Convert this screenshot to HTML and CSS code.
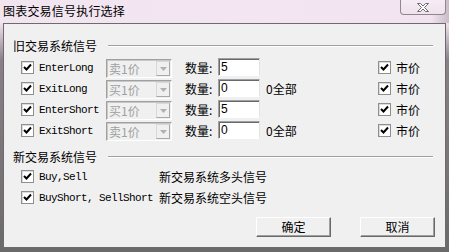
FILE: index.html
```html
<!DOCTYPE html>
<html lang="zh-CN">
<head>
  <meta charset="UTF-8">
  <meta name="viewport" content="width=device-width, initial-scale=1">
  <title>图表交易信号执行选择</title>
  <link rel="stylesheet" href="styles.css">
</head>
<body>

  <div class="window">
    <div class="titlebar">
      <span class="title">图表交易信号执行选择</span>
      <span class="close">
        <svg width="14" height="11" viewBox="0 0 14 11">
          <path d="M1.5 1.5h3l2.5 2.5 2.5-2.5h3l-4 4 4 4h-3l-2.5-2.5-2.5 2.5h-3l4-4z" fill="#fff" stroke="#6d6d6d" stroke-width="1"/>
        </svg>
      </span>
    </div>

    <div class="client">

      <div class="group-head"><span>旧交易系统信号</span><i class="rule"></i></div>

      <div class="sig-row">
        <label class="chk"><span class="box"><svg width="9" height="9" viewBox="0 0 9 9"><path d="M1 4l2.5 2.5L8 1.5" /></svg></span><span class="code">EnterLong</span></label>
        <div class="combo"><span class="combo-text">卖1价</span><span class="drop"><svg width="7" height="4" viewBox="0 0 7 4"><path d="M0 0h7L3.5 4z"/></svg></span></div>
        <span class="qty-label">数量:</span>
        <div class="field">5</div>
        <span class="hint"></span>
        <label class="chk"><span class="box"><svg width="9" height="9" viewBox="0 0 9 9"><path d="M1 4l2.5 2.5L8 1.5" /></svg></span><span>市价</span></label>
      </div>

      <div class="sig-row">
        <label class="chk"><span class="box"><svg width="9" height="9" viewBox="0 0 9 9"><path d="M1 4l2.5 2.5L8 1.5" /></svg></span><span class="code">ExitLong</span></label>
        <div class="combo"><span class="combo-text">买1价</span><span class="drop"><svg width="7" height="4" viewBox="0 0 7 4"><path d="M0 0h7L3.5 4z"/></svg></span></div>
        <span class="qty-label">数量:</span>
        <div class="field">0</div>
        <span class="hint">0全部</span>
        <label class="chk"><span class="box"><svg width="9" height="9" viewBox="0 0 9 9"><path d="M1 4l2.5 2.5L8 1.5" /></svg></span><span>市价</span></label>
      </div>

      <div class="sig-row">
        <label class="chk"><span class="box"><svg width="9" height="9" viewBox="0 0 9 9"><path d="M1 4l2.5 2.5L8 1.5" /></svg></span><span class="code">EnterShort</span></label>
        <div class="combo"><span class="combo-text">买1价</span><span class="drop"><svg width="7" height="4" viewBox="0 0 7 4"><path d="M0 0h7L3.5 4z"/></svg></span></div>
        <span class="qty-label">数量:</span>
        <div class="field">5</div>
        <span class="hint"></span>
        <label class="chk"><span class="box"><svg width="9" height="9" viewBox="0 0 9 9"><path d="M1 4l2.5 2.5L8 1.5" /></svg></span><span>市价</span></label>
      </div>

      <div class="sig-row">
        <label class="chk"><span class="box"><svg width="9" height="9" viewBox="0 0 9 9"><path d="M1 4l2.5 2.5L8 1.5" /></svg></span><span class="code">ExitShort</span></label>
        <div class="combo"><span class="combo-text">卖1价</span><span class="drop"><svg width="7" height="4" viewBox="0 0 7 4"><path d="M0 0h7L3.5 4z"/></svg></span></div>
        <span class="qty-label">数量:</span>
        <div class="field">0</div>
        <span class="hint">0全部</span>
        <label class="chk"><span class="box"><svg width="9" height="9" viewBox="0 0 9 9"><path d="M1 4l2.5 2.5L8 1.5" /></svg></span><span>市价</span></label>
      </div>

      <div class="group-head second"><span>新交易系统信号</span><i class="rule"></i></div>

      <div class="new-row">
        <label class="chk"><span class="box"><svg width="9" height="9" viewBox="0 0 9 9"><path d="M1 4l2.5 2.5L8 1.5" /></svg></span><span class="code">Buy,Sell</span></label>
        <span>新交易系统多头信号</span>
      </div>

      <div class="new-row">
        <label class="chk"><span class="box"><svg width="9" height="9" viewBox="0 0 9 9"><path d="M1 4l2.5 2.5L8 1.5" /></svg></span><span class="code">BuyShort, SellShort</span></label>
        <span>新交易系统空头信号</span>
      </div>

      <div class="buttons">
        <button class="btn">确定</button>
        <button class="btn">取消</button>
      </div>

    </div>
  </div>

</body>
</html>
```

FILE: styles.css
```css
body {
  margin: 0;
  padding: 0;
  width: 449px;
  height: 252px;
  overflow: hidden;
  font-family: "Noto Sans CJK SC", "Liberation Sans", sans-serif;
  font-size: 12px;
  color: #000;
  background: #f2e5f1;
}

.window {
  width: 449px;
  height: 252px;
  background: linear-gradient(180deg, #f2e5f1 0, #f2e5f1 22px, #8a8088 60px, #6a6a6a 100%);
}

.titlebar {
  height: 23px;
  display: flex;
  justify-content: space-between;
  align-items: flex-start;
  background: linear-gradient(90deg, #f1e5f0 0, #f3e6f2 60%, #f1e3f0 96%, #c9bcc7 100%);
}

.title {
  margin: 4px 0 0 3px;
  line-height: 14px;
  letter-spacing: 0.2px;
}

.close {
  width: 44px;
  height: 14px;
  margin-right: 3px;
  border: 1px solid #8f8690;
  border-top: none;
  border-radius: 0 0 4px 4px;
  background: linear-gradient(180deg, #f6ecf5, #efe2ee);
  display: flex;
  justify-content: center;
  align-items: center;
}

.client {
  margin-left: 3px;
  width: 441px;
  height: 223px;
  border: 1px solid #6e6a6e;
  background: #f0f0f0;
}

/* group headers */
.group-head {
  display: flex;
  align-items: center;
  height: 14px;
  margin-top: 15px;
  padding-left: 9px;
  padding-right: 12px;
  line-height: 14px;
}

.group-head.second {
  margin-top: 9px;
}

.rule {
  flex: 1;
  height: 0;
  margin-left: 11px;
  border-top: 1px solid #a0a0a0;
  border-bottom: 1px solid #fff;
}

/* old signal rows */
.sig-row {
  display: grid;
  grid-template-columns: 85px 66px 46px 42px 118px auto;
  align-items: center;
  height: 21px;
  padding-left: 17px;
}

.sig-row:first-of-type {
  margin-top: 4px;
}

.group-head + .sig-row {
  margin-top: 4px;
}

.chk {
  display: flex;
  align-items: center;
  gap: 5px;
  line-height: 14px;
}

.box {
  width: 11px;
  height: 11px;
  border: 1px solid #8e8f8f;
  background: #fff;
  box-shadow: inset 1px 1px 0 #dcdcdc;
  display: flex;
  justify-content: center;
  align-items: center;
}

.box path {
  fill: none;
  stroke: #000;
  stroke-width: 2;
}

.code {
  font-family: "Liberation Mono", "DejaVu Sans Mono", monospace;
  font-size: 11px;
  letter-spacing: -0.6px;
  white-space: pre;
}

.combo {
  height: 17px;
  margin-top: 2px;
  display: flex;
  align-items: center;
  justify-content: space-between;
  border-top: 1px solid #a0a0a0;
  border-left: 1px solid #a0a0a0;
  border-bottom: 1px solid #fff;
  border-right: 1px solid #fff;
  box-shadow: inset 1px 1px 0 #c8c8c8;
  background: #f0f0f0;
}

.combo-text {
  padding-left: 2px;
  color: #a0a0a0;
  line-height: 14px;
}

.drop {
  width: 12px;
  height: 13px;
  margin-right: 1px;
  border: 1px solid #d8d8d8;
  border-right-color: #a8a8a8;
  border-bottom-color: #a8a8a8;
  background: #f0f0f0;
  display: flex;
  justify-content: center;
  align-items: center;
}

.drop path {
  fill: #b0b0b0;
}

.qty-label {
  padding-left: 13px;
  line-height: 14px;
}

.field {
  height: 16px;
  margin-top: -2px;
  padding-left: 2px;
  line-height: 16px;
  background: #fff;
  border-top: 1px solid #a0a0a0;
  border-left: 1px solid #a0a0a0;
  border-bottom: 1px solid #fff;
  border-right: 1px solid #e3e3e3;
  box-shadow: inset 1px 1px 0 #696969;
  font-family: "Liberation Sans", sans-serif;
  font-size: 12px;
}

.hint {
  padding-left: 6px;
  line-height: 14px;
}

/* new signal rows */
.new-row {
  display: grid;
  grid-template-columns: 138px auto;
  align-items: center;
  height: 21px;
  padding-left: 17px;
  line-height: 14px;
}

.group-head.second + .new-row {
  margin-top: 2px;
}

/* buttons */
.buttons {
  display: flex;
  justify-content: flex-end;
  gap: 29px;
  margin-top: 9px;
  padding-right: 10px;
}

.btn {
  width: 75px;
  height: 20px;
  padding: 0;
  font-family: "Noto Sans CJK SC", sans-serif;
  font-size: 12px;
  line-height: 14px;
  color: #000;
  background: #f0f0f0;
  border-top: 1px solid #fff;
  border-left: 1px solid #fff;
  border-right: 1px solid #696969;
  border-bottom: 1px solid #696969;
  box-shadow: inset -1px -1px 0 #a0a0a0;
}
```
